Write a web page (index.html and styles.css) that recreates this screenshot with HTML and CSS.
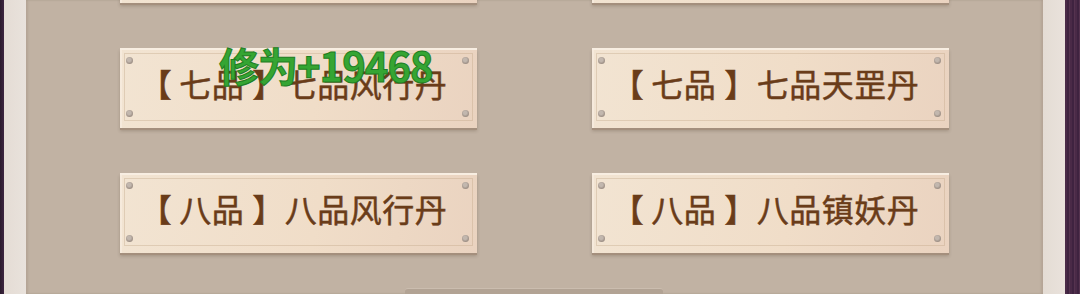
FILE: index.html
```html
<!DOCTYPE html>
<html lang="zh">
<head>
<meta charset="utf-8">
<link rel="stylesheet" href="styles.css">
</head>
<body>
<div class="frame">
  <div class="edge edge-left"></div>
  <div class="rim"></div>
  <main class="content">
    <div class="grid">
      <div class="plate"><i class="s tl"></i><i class="s tr"></i><i class="s bl"></i><i class="s br"></i></div>
      <div class="plate"><i class="s tl"></i><i class="s tr"></i><i class="s bl"></i><i class="s br"></i></div>
      <div class="plate"><i class="s tl"></i><i class="s tr"></i><i class="s bl"></i><i class="s br"></i><span class="label"><span class="bo">【</span>七品<span class="bc">】</span>七品风行丹</span></div>
      <div class="plate"><i class="s tl"></i><i class="s tr"></i><i class="s bl"></i><i class="s br"></i><span class="label"><span class="bo">【</span>七品<span class="bc">】</span>七品天罡丹</span></div>
      <div class="plate"><i class="s tl"></i><i class="s tr"></i><i class="s bl"></i><i class="s br"></i><span class="label"><span class="bo">【</span>八品<span class="bc">】</span>八品风行丹</span></div>
      <div class="plate"><i class="s tl"></i><i class="s tr"></i><i class="s bl"></i><i class="s br"></i><span class="label"><span class="bo">【</span>八品<span class="bc">】</span>八品镇妖丹</span></div>
    </div>
    <div class="bottom-btn"></div>
    <div class="toast">修为+19468</div>
  </main>
  <div class="rim"></div>
  <div class="edge edge-right"></div>
</div>
</body>
</html>
```
FILE: styles.css
```css
html, body {
  margin: 0;
  padding: 0;
  width: 1080px;
  height: 294px;
  overflow: hidden;
  background: #c1b2a3;
}
.frame {
  display: flex;
  width: 1080px;
  height: 294px;
}
.edge {
  flex: none;
}
.edge-left {
  width: 4px;
  background: linear-gradient(90deg, #2a1a2c, #3d2640);
}
.edge-right {
  width: 15px;
  background: repeating-linear-gradient(90deg, #4a2a47 0 2px, #3f2340 2px 4px, #55334f 4px 5px);
}
.rim {
  flex: none;
  width: 22px;
  background: linear-gradient(90deg, #e4dcd4, #e9e2dc);
}
.rim:last-of-type {
  width: 21px;
}
.content {
  flex: 1;
  position: relative;
  background: #c1b2a3;
  box-shadow: inset 2px 0 2px rgba(90, 70, 55, 0.12), inset -2px 0 2px rgba(90, 70, 55, 0.12);
  padding-left: 94px;
  overflow: hidden;
}
.grid {
  display: grid;
  grid-template-columns: 357px 357px;
  grid-auto-rows: 80px;
  column-gap: 115px;
  row-gap: 45px;
  margin-top: -77px;
}
.plate {
  position: relative;
  display: flex;
  align-items: center;
  justify-content: center;
  background: linear-gradient(100deg, #f2e4d2 0%, #f0ddc8 55%, #ead3c0 100%);
  box-shadow: 0 2px 0 #a48f7d, 0 3px 3px rgba(70, 50, 35, 0.25), inset 0 2px 0 #f8eee2, inset 2px 0 0 #f6eadc;
  font-family: "Noto Sans CJK SC", "Noto Sans CJK JP", sans-serif;
  font-size: 32px;
  color: #6a3c19;
  -webkit-text-stroke: 0.5px #6a3c19;
}
.plate::before {
  content: "";
  position: absolute;
  left: 4px;
  right: 4px;
  top: 5px;
  bottom: 7px;
  border: 1px solid rgba(190, 160, 130, 0.35);
  pointer-events: none;
}
.label {
  position: relative;
  top: -5px;
  left: -5px;
  letter-spacing: 0.5px;
  white-space: nowrap;
}
.bo {
  margin-right: 7px;
}
.bc {
  margin-left: 8px;
}
.s {
  position: absolute;
  width: 7px;
  height: 7px;
  border-radius: 50%;
  background: radial-gradient(circle at 45% 40%, #c2b7ae 0 30%, #9c8e84 70%, #b8aba0 100%);
}
.tl { left: 6px; top: 9px; }
.bl { left: 6px; bottom: 11px; }
.tr { right: 8px; top: 9px; }
.br { right: 8px; bottom: 11px; }
.bottom-btn {
  width: 258px;
  height: 12px;
  margin-top: 35px;
  margin-left: 285px;
  background: #b2a394;
  border-top: 1px solid #cbbdaf;
  border-radius: 3px 3px 0 0;
}
.toast {
  position: absolute;
  left: 193px;
  top: 45px;
  font-family: "Noto Sans CJK SC", "Liberation Sans", sans-serif;
  font-weight: 700;
  font-size: 40px;
  line-height: 1;
  color: #35a533;
  -webkit-text-stroke: 1px #1f7e22;
  letter-spacing: -1px;
}
```
